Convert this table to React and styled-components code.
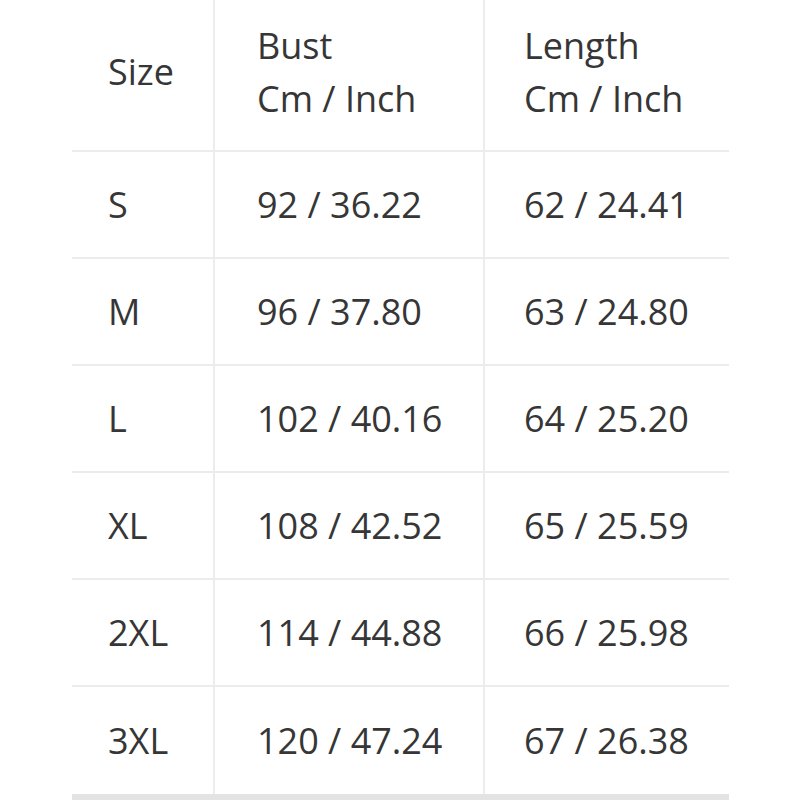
import React from "react";
import styled, { createGlobalStyle } from "styled-components";

const Global = createGlobalStyle`
  html, body { margin: 0; padding: 0; background: #fff; }
  body { overflow: hidden; }
`;

const Page = styled.div`
  width: 800px;
  height: 800px;
  overflow: hidden;
  padding-left: 72px;
  box-sizing: border-box;
`;

const Table = styled.div`
  width: 657px;
  margin-top: -7px;
  display: grid;
  grid-template-columns: 141px 270px 246px;
  font-family: "Open Sans", "Noto Sans", sans-serif;
  font-size: 36px;
  color: #363636;
`;

const Cell = styled.div`
  box-sizing: border-box;
  height: ${(p) => (p.$head ? 159 : 107)}px;
  display: flex;
  align-items: center;
  padding-left: ${(p) => p.$pad}px;
  border-left: ${(p) => (p.$first ? "none" : "2px solid #ececec")};
  border-bottom: ${(p) => (p.$last ? "none" : "2px solid #ececec")};
  line-height: 53px;
  white-space: nowrap;
`;

const Stack = styled.div`
  display: flex;
  flex-direction: column;
`;

const Bar = styled.div`
  width: 657px;
  height: 8px;
  background: #e3e3e3;
`;

const pads = [36, 42, 39];

const rows = [
  ["S", "92 / 36.22", "62 / 24.41"],
  ["M", "96 / 37.80", "63 / 24.80"],
  ["L", "102 / 40.16", "64 / 25.20"],
  ["XL", "108 / 42.52", "65 / 25.59"],
  ["2XL", "114 / 44.88", "66 / 25.98"],
  ["3XL", "120 / 47.24", "67 / 26.38"],
];

export default function App() {
  return (
    <>
      <Global />
      <Page>
        <Table>
          <Cell $head $first $pad={pads[0]}>Size</Cell>
          <Cell $head $pad={pads[1]}>
            <Stack>
              <span>Bust</span>
              <span>Cm / Inch</span>
            </Stack>
          </Cell>
          <Cell $head $pad={pads[2]}>
            <Stack>
              <span>Length</span>
              <span>Cm / Inch</span>
            </Stack>
          </Cell>
          {rows.map((r, i) =>
            r.map((v, j) => (
              <Cell
                key={i + "-" + j}
                $first={j === 0}
                $last={i === rows.length - 1}
                $pad={pads[j]}
              >
                {v}
              </Cell>
            ))
          )}
        </Table>
        <Bar />
      </Page>
    </>
  );
}
